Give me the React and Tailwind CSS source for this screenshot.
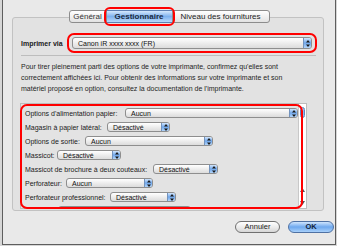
import React from "react"

const rows = [
    { label: "Options d'alimentation papier:", labelW: "w-[96px]", popW: "w-[173px]", value: "Aucun" },
    { label: "Magasin à papier latéral:", labelW: "w-[78px]", popW: "w-[63px]", value: "Désactivé" },
    { label: "Options de sortie:", labelW: "w-[56px]", popW: "w-[128px]", value: "Aucun" },
    { label: "Massicot:", labelW: "w-[28px]", popW: "w-[64px]", value: "Désactivé" },
    { label: "Massicot de brochure à deux couteaux:", labelW: "w-[124px]", popW: "w-[65px]", value: "Désactivé" },
    { label: "Perforateur:", labelW: "w-[37px]", popW: "w-[87px]", value: "Aucun" },
    { label: "Perforateur professionnel:", labelW: "w-[81px]", popW: "w-[66px]", value: "Désactivé" },
    // next row only peeks in under the bottom edge
    { label: "", labelW: "w-[29px]", popW: "w-[133px]", value: "" },
]

function Arrows() {
    return (
        <svg width="4" height="7" viewBox="0 0 4 7">
            <path d="M2 0 L4 2.6 H0 Z M0 4.4 H4 L2 7 Z" fill="#1a1a1a" />
        </svg>
    )
}

function Popup({ value, className }) {
    return (
        <div className={`flex shrink-0 overflow-hidden rounded-[3px] border border-[#8e8e8e] bg-linear-to-b from-white to-[#dcdcdc] ${className}`}>
            <span className="flex flex-1 items-center whitespace-nowrap pl-[5px] text-[7px] leading-none text-[#111]">{value}</span>
            <span className="flex w-[8px] items-center justify-center border-l border-[#7393bd] bg-linear-to-b from-[#d3e6fc] via-[#6fa6ea] to-[#b3d5f9]">
                <Arrows />
            </span>
        </div>
    )
}

export default function App() {
    return (
        <div className="h-[246px] w-[337px] overflow-hidden bg-[#d6d6d6] pb-[1px] pl-[2px] pr-[1px] font-[family-name:Liberation_Sans,Arial,sans-serif] text-[#1a1a1a]">
            <div className="flex h-full flex-col border-x border-b border-[#5e5e5e] bg-[#e9e9e9] pt-[10px]">
                {/* tabs */}
                <div className="relative z-10 -mb-[6px] flex h-[13px] justify-center">
                    <div className="flex h-[13px] text-[8px] leading-none">
                        <div className="flex w-[38px] items-center justify-center rounded-l-[3px] border border-[#8c8c8c] bg-linear-to-b from-white to-[#e2e2e2] text-[#333]">
                            Général
                        </div>
                        <div className="relative flex w-[65px] items-center justify-center border-y border-[#5d80b3] bg-linear-to-b from-[#d6e8fc] via-[#7eb1ee] to-[#b9d8fa] font-bold text-[#1b2a40]">
                            Gestionnaire
                            <div className="absolute -bottom-[4px] -left-[3px] -right-[3px] -top-[4px] rounded-[6px] border-2 border-[#f00]" />
                        </div>
                        <div className="flex w-[98px] items-center justify-center rounded-r-[3px] border border-[#8c8c8c] bg-linear-to-b from-white to-[#e2e2e2] text-[#222]">
                            Niveau des fournitures
                        </div>
                    </div>
                </div>

                {/* group box */}
                <div className="ml-[9px] mr-[11px] flex h-[194px] flex-col rounded-[3px] border border-[#c2c2c2] bg-[#e2e2e2]">
                    <div className="mt-[19px] flex h-[12px] items-center pl-[8px]">
                        <span className="w-[51px] whitespace-nowrap text-[7px] font-bold leading-none">Imprimer via</span>
                        <div className="relative">
                            <Popup value="Canon iR xxxx xxxx (FR)" className="h-[12px] w-[240px]" />
                            <div className="absolute -bottom-[4px] -left-[5px] -right-[5px] -top-[4px] rounded-[7px] border-2 border-[#f00]" />
                        </div>
                    </div>
                    <div className="ml-[8px] mr-[7px] mt-[6px] h-px bg-[#bdbdbd]" />
                    <p className="ml-[8px] mt-[5px] text-[7px] leading-[11px] text-[#1e1e1e]">
                        Pour tirer pleinement parti des options de votre imprimante, confirmez qu'elles sont<br />
                        correctement affichées ici. Pour obtenir des informations sur votre imprimante et son<br />
                        matériel proposé en option, consultez la documentation de l'imprimante.
                    </p>

                    {/* scrolling list */}
                    <div className="relative ml-[7px] mt-[9px] h-[106px] w-[287px]">
                        <div className="flex h-full overflow-hidden border border-[#bdbdbd] bg-[#e3e3e3]">
                            <div className="flex-1 overflow-hidden pl-[4px] pt-[2px]">
                                {rows.map((row, i) => (
                                    <div key={i} className="flex h-[14px] items-center">
                                        <span className={`${row.labelW} mr-[4px] shrink-0 whitespace-nowrap text-[7px] leading-none`}>{row.label}</span>
                                        <Popup value={row.value} className={`h-[10px] ${row.popW}`} />
                                    </div>
                                ))}
                            </div>
                            <div className="flex w-[8px] flex-col items-center border-l border-[#c8c8c8] bg-white pb-[3px] pt-[3px]">
                                <div className="h-[11px] w-[5px] rounded-full border border-[#5d86c0] bg-linear-to-r from-[#8dbaf0] via-[#cfe4fc] to-[#6fa3e6]" />
                                <div className="flex-1" />
                                <svg width="5" height="4" viewBox="0 0 5 4" className="mb-[9px]">
                                    <path d="M2.5 0 L5 4 H0 Z" fill="#555" />
                                </svg>
                                <svg width="5" height="4" viewBox="0 0 5 4">
                                    <path d="M0 0 H5 L2.5 4 Z" fill="#555" />
                                </svg>
                            </div>
                        </div>
                        <div className="absolute left-0 top-[1px] h-[105px] w-[283px] rounded-[7px] border-2 border-[#f00]" />
                    </div>
                </div>

                {/* buttons */}
                <div className="mt-[10px] flex justify-end gap-[8px] pr-[1px]">
                    <button className="flex h-[12px] w-[45px] items-center justify-center rounded-full border border-[#707070] bg-linear-to-b from-white via-[#ececec] to-[#d6d6d6] text-[7.5px] leading-none text-[#222]">
                        Annuler
                    </button>
                    <button className="flex h-[12px] w-[46px] items-center justify-center rounded-full border border-[#4f71a3] bg-linear-to-b from-[#cfe5fd] via-[#6ea8ee] to-[#a8d0fa] text-[7.5px] font-bold leading-none text-[#14243c]">
                        OK
                    </button>
                </div>
            </div>
        </div>
    )
}
